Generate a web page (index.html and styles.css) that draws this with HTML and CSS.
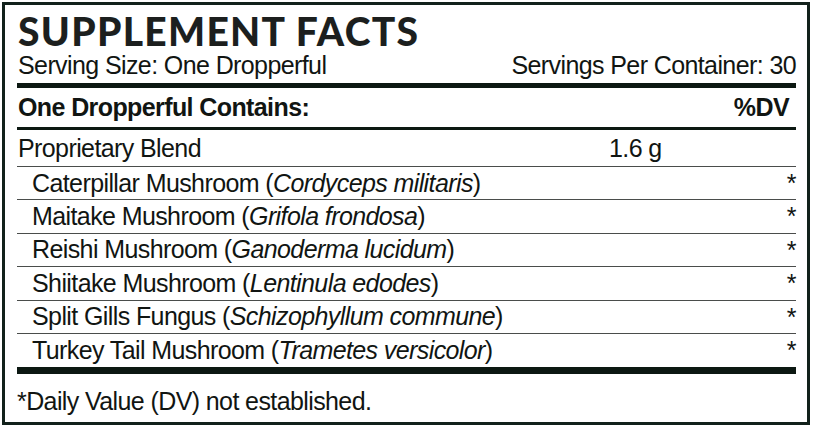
FILE: index.html
```html
<!DOCTYPE html>
<html>
<head>
<meta charset="utf-8">
<link rel="stylesheet" href="styles.css">
</head>
<body>
<div class="label">
  <div class="inner">
    <h1 class="title">SUPPLEMENT FACTS</h1>
    <div class="serving">
      <span>Serving Size: One Dropperful</span>
      <span>Servings Per Container: 30</span>
    </div>
    <div class="bar bar-top"></div>
    <div class="head">
      <span>One Dropperful Contains:</span>
      <span>%DV</span>
    </div>
    <div class="bar bar-mid"></div>
    <div class="row blend">
      <span class="name">Proprietary Blend</span>
      <span class="amount">1.6 g</span>
      <span class="dv"></span>
    </div>
    <div class="row sub">
      <span class="name">Caterpillar Mushroom (<i>Cordyceps militaris</i>)</span>
      <span class="dv">*</span>
    </div>
    <div class="row sub">
      <span class="name">Maitake Mushroom (<i>Grifola frondosa</i>)</span>
      <span class="dv">*</span>
    </div>
    <div class="row sub">
      <span class="name">Reishi Mushroom (<i>Ganoderma lucidum</i>)</span>
      <span class="dv">*</span>
    </div>
    <div class="row sub">
      <span class="name">Shiitake Mushroom (<i>Lentinula edodes</i>)</span>
      <span class="dv">*</span>
    </div>
    <div class="row sub">
      <span class="name">Split Gills Fungus (<i>Schizophyllum commune</i>)</span>
      <span class="dv">*</span>
    </div>
    <div class="row sub last">
      <span class="name">Turkey Tail Mushroom (<i>Trametes versicolor</i>)</span>
      <span class="dv">*</span>
    </div>
    <div class="bar bar-bottom"></div>
    <p class="note">*Daily Value (DV) not established.</p>
  </div>
</div>
</body>
</html>
```

FILE: styles.css
```css
html, body {
  margin: 0;
  padding: 0;
  background: #ffffff;
}

.label {
  box-sizing: border-box;
  width: 808px;
  height: 423px;
  margin: 2px 0 0 2px;
  border: 3px solid #12211b;
  color: #111512;
  font-family: "Liberation Sans", Arial, sans-serif;
  font-size: 25px;
  letter-spacing: -0.6px;
}

.inner {
  padding: 0 11px 0 12px;
}

.title {
  margin: 0;
  padding-top: 5px;
  height: 42px;
  font-family: "Lato", "Liberation Sans", sans-serif;
  font-weight: 900;
  font-size: 39px;
  line-height: 42px;
  letter-spacing: 1.3px;
  color: #1c1f1e;
  padding-left: 1px;
}

.serving {
  display: flex;
  justify-content: space-between;
  height: 28px;
  padding-bottom: 3px;
  line-height: 26px;
  padding-left: 1px;
}

.bar {
  background: #0c1812;
}

.bar-top {
  height: 5px;
}

.head {
  display: flex;
  justify-content: space-between;
  align-items: center;
  height: 39px;
  font-weight: 700;
  padding: 0 7px 0 1px;
}

.bar-mid {
  height: 3px;
}

.row {
  display: flex;
  align-items: center;
  box-sizing: border-box;
  border-bottom: 1px solid #4a4d4b;
}

.blend {
  height: 37px;
  padding-left: 1px;
}

.sub {
  height: 33.4px;
  padding-left: 15px;
}

.sub.last {
  border-bottom: none;
}

.name {
  flex: 1;
}

.amount {
  width: 167px;
}

.dv {
  width: 20px;
  text-align: right;
  align-self: flex-start;
  padding-top: 2px;
}

.bar-bottom {
  height: 7px;
}

.note {
  margin: 0;
  padding-top: 13px;
  line-height: 28px;
}
```
